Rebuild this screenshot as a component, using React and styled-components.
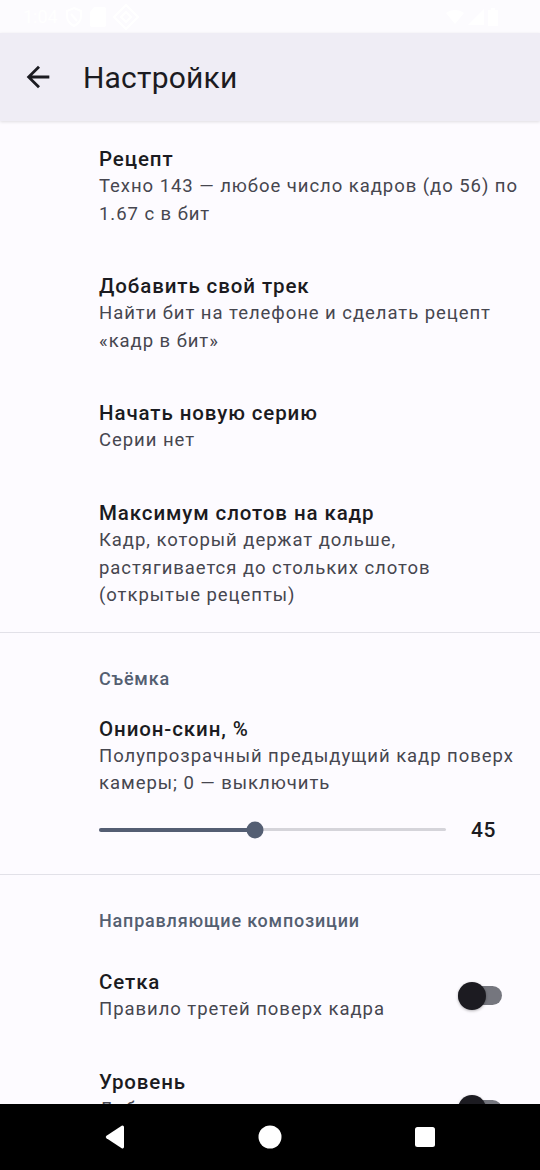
import styled, { createGlobalStyle } from "styled-components";

const GlobalStyle = createGlobalStyle`
  html, body {
    margin: 0;
    padding: 0;
    background: #fdfbff;
  }
  body {
    font-family: Roboto, "Noto Sans", sans-serif;
    -webkit-font-smoothing: antialiased;
  }
`;

const Screen = styled.div`
  height: 100vh;
  display: flex;
  flex-direction: column;
  background: #fdfbff;
  overflow: hidden;
`;

const StatusBar = styled.div`
  height: 33px;
  flex-shrink: 0;
  display: flex;
  align-items: center;
  justify-content: space-between;
  padding: 0 42px 0 23px;
  background: #fcfbfe;
  color: #ffffff;
`;

const StatusGroup = styled.div`
  display: flex;
  align-items: center;
  gap: 4px;
`;

const Clock = styled.span`
  font-size: 18px;
  margin-right: 2px;
`;

const AppBar = styled.header`
  height: 88px;
  flex-shrink: 0;
  display: flex;
  align-items: center;
  background: #efedf5;
  box-shadow: 0 1px 3px rgba(0, 0, 0, 0.12);
  position: relative;
  z-index: 1;
`;

const BackButton = styled.button`
  width: 34px;
  height: 34px;
  margin-left: 21px;
  margin-right: 28px;
  padding: 0;
  border: 0;
  background: none;
  display: flex;
  color: #1b1b21;
`;

const AppTitle = styled.h1`
  margin: 0;
  font-size: 30px;
  font-weight: 400;
  color: #1b1b21;
  letter-spacing: 0.2px;
`;

const Content = styled.main`
  flex: 1;
  overflow: hidden;
  padding-top: 2px;
`;

const Pref = styled.div`
  display: flex;
  align-items: center;
  padding: 22px 16px 22px 99px;
`;

const PrefText = styled.div`
  flex: 1;
  min-width: 0;
`;

const PrefTitle = styled.div`
  font-size: 20.5px;
  font-weight: 500;
  line-height: 28px;
  letter-spacing: 0.9px;
  color: #1b1b21;
`;

const PrefSummary = styled.div`
  font-size: 18.5px;
  line-height: 27.6px;
  letter-spacing: 0.95px;
  color: #46464f;
`;

const Divider = styled.hr`
  margin: 0;
  border: 0;
  height: 1px;
  background: #e2e1e8;
`;

const Category = styled.div`
  padding: 34px 24px ${({ $after }) => $after}px 99px;
  font-size: 18px;
  font-weight: 500;
  line-height: 24px;
  letter-spacing: 0.8px;
  color: #545f71;
`;

const SliderRow = styled.div`
  display: flex;
  align-items: center;
  height: 44px;
  margin-top: 10px;
  margin-right: 8px;
`;

const Track = styled.div`
  flex: 1;
  height: 3px;
  background: #d5d4da;
  border-radius: 2px;
  position: relative;
  margin-right: 25px;
`;

const ActiveTrack = styled.div`
  position: absolute;
  left: 0;
  top: -0.5px;
  height: 4px;
  border-radius: 2px;
  background: #545e73;
`;

const Thumb = styled.div`
  position: absolute;
  top: 50%;
  width: 17px;
  height: 17px;
  border-radius: 50%;
  background: #545e73;
  transform: translate(-50%, -50%);
`;

const SliderValue = styled.span`
  width: 45px;
  font-size: 21px;
  font-weight: 500;
  letter-spacing: 0.5px;
  color: #1b1b21;
`;

const SwitchTrack = styled.div`
  width: 44px;
  height: 19px;
  border-radius: 10px;
  background: #75767e;
  position: relative;
  margin-left: 20px;
  margin-right: 22px;
  flex-shrink: 0;
`;

const SwitchThumb = styled.div`
  position: absolute;
  left: 0;
  top: 50%;
  width: 28px;
  height: 28px;
  border-radius: 50%;
  background: #1c1b21;
  transform: translateY(-50%);
  box-shadow: 0 1px 3px rgba(0, 0, 0, 0.3);
`;

const NavBar = styled.nav`
  height: 66px;
  flex-shrink: 0;
  background: #000;
  display: flex;
  justify-content: center;
  align-items: center;
`;

const NavCell = styled.div`
  width: 155px;
  display: flex;
  justify-content: center;
  align-items: center;
`;

const BackArrow = () => (
  <svg width="34" height="34" viewBox="0 0 24 24" fill="currentColor">
    <path d="M20 11H7.83l5.59-5.59L12 4l-8 8 8 8 1.41-1.41L7.83 13H20v-2z" />
  </svg>
);

const Slider = ({ value }) => (
  <SliderRow>
    <Track>
      <ActiveTrack style={{ width: `${value}%` }} />
      <Thumb style={{ left: `${value}%` }} />
    </Track>
    <SliderValue>{value}</SliderValue>
  </SliderRow>
);

const Switch = () => (
  <SwitchTrack>
    <SwitchThumb />
  </SwitchTrack>
);

const Preference = ({ title, summary, children, widget }) => (
  <Pref>
    <PrefText>
      <PrefTitle>{title}</PrefTitle>
      {summary && (
        <PrefSummary>
          {[].concat(summary).map((line, i) => (
            <span key={i}>
              {i > 0 && <br />}
              {line}
            </span>
          ))}
        </PrefSummary>
      )}
      {children}
    </PrefText>
    {widget}
  </Pref>
);

export default function App() {
  return (
    <Screen>
      <GlobalStyle />
      <StatusBar>
        <StatusGroup>
          <Clock>1:04</Clock>
          <svg width="20" height="22" viewBox="0 0 20 22" fill="none" stroke="#fff" strokeWidth="2">
            <path d="M10 2 L17 5 V10 C17 15 14 18 10 20 C6 18 3 15 3 10 V5 Z" />
            <path d="M7 8 L13 15" />
          </svg>
          <svg width="20" height="24" viewBox="0 0 20 24" fill="#fff">
            <path d="M6 2 H16 a2 2 0 0 1 2 2 V20 a2 2 0 0 1 -2 2 H4 a2 2 0 0 1 -2 -2 V7 Z" />
          </svg>
          <svg width="28" height="28" viewBox="0 0 28 28" fill="none" stroke="#fff" strokeWidth="2">
            <path d="M14 2 L26 14 L14 26 L2 14 Z" />
            <path d="M9 14 L14 9 L19 14 L14 19 Z" />
          </svg>
        </StatusGroup>
        <StatusGroup>
          <svg width="18" height="14" viewBox="0 0 18 14" fill="#fff">
            <path d="M9 14 L0 3 C5 -1 13 -1 18 3 Z" />
          </svg>
          <svg width="16" height="16" viewBox="0 0 16 16" fill="#fff">
            <path d="M16 0 V16 H0 Z" />
          </svg>
          <svg width="10" height="18" viewBox="0 0 10 18" fill="#fff">
            <path d="M3 0 H7 V2 H10 V18 H0 V2 H3 Z" />
          </svg>
        </StatusGroup>
      </StatusBar>

      <AppBar>
        <BackButton aria-label="Назад">
          <BackArrow />
        </BackButton>
        <AppTitle>Настройки</AppTitle>
      </AppBar>

      <Content>
        <Preference
          title="Рецепт"
          summary={["Техно 143 — любое число кадров (до 56) по", "1.67 с в бит"]}
        />
        <Preference
          title="Добавить свой трек"
          summary={["Найти бит на телефоне и сделать рецепт", "«кадр в бит»"]}
        />
        <Preference title="Начать новую серию" summary="Серии нет" />
        <Preference
          title="Максимум слотов на кадр"
          summary={[
            "Кадр, который держат дольше,",
            "растягивается до стольких слотов",
            "(открытые рецепты)",
          ]}
        />
        <Divider />

        <Category $after={2}>Съёмка</Category>
        <Preference
          title="Онион-скин, %"
          summary={["Полупрозрачный предыдущий кадр поверх", "камеры; 0 — выключить"]}
        >
          <Slider value={45} />
        </Preference>
        <Divider />

        <Category $after={13}>Направляющие композиции</Category>
        <Preference
          title="Сетка"
          summary="Правило третей поверх кадра"
          widget={<Switch />}
        />
        <Preference
          title="Уровень"
          summary={["Добавить линию горизонта поверх", "кадра по датчику наклона"]}
          widget={<Switch />}
        />
      </Content>

      <NavBar>
        <NavCell>
          <svg width="24" height="26" viewBox="0 0 24 26" fill="#fff">
            <path d="M21 3 V23 a1.5 1.5 0 0 1 -2.3 1.2 L3.5 14.2 a1.5 1.5 0 0 1 0 -2.4 L18.7 1.8 A1.5 1.5 0 0 1 21 3 Z" />
          </svg>
        </NavCell>
        <NavCell>
          <svg width="24" height="24" viewBox="0 0 24 24" fill="#fff">
            <circle cx="12" cy="12" r="11.5" />
          </svg>
        </NavCell>
        <NavCell>
          <svg width="22" height="22" viewBox="0 0 22 22" fill="#fff">
            <rect x="1" y="1" width="20" height="20" rx="2.5" />
          </svg>
        </NavCell>
      </NavBar>
    </Screen>
  );
}
